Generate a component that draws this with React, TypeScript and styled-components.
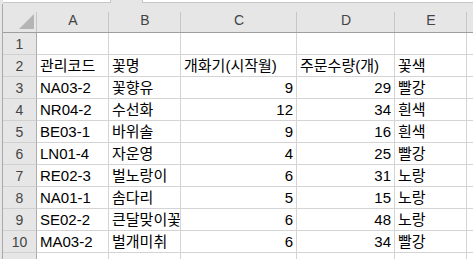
import React from "react";
import styled, { createGlobalStyle } from "styled-components";

const GlobalStyle = createGlobalStyle`
    html, body {
        margin: 0;
        padding: 0;
        background: #e6e6e6;
        overflow: hidden;
    }
    body {
        font-family: "Liberation Sans", "Noto Sans CJK KR", sans-serif;
    }
`;

type Row = {
    code: string;
    name: string;
    month: number;
    qty: number;
    color: string;
};

const rows: Row[] = [
    { code: "NA03-2", name: "꽃향유", month: 9, qty: 29, color: "빨강" },
    { code: "NR04-2", name: "수선화", month: 12, qty: 34, color: "흰색" },
    { code: "BE03-1", name: "바위솔", month: 9, qty: 16, color: "흰색" },
    { code: "LN01-4", name: "자운영", month: 4, qty: 25, color: "빨강" },
    { code: "RE02-3", name: "벌노랑이", month: 6, qty: 31, color: "노랑" },
    { code: "NA01-1", name: "솜다리", month: 5, qty: 15, color: "노랑" },
    { code: "SE02-2", name: "큰달맞이꽃", month: 6, qty: 48, color: "노랑" },
    { code: "MA03-2", name: "벌개미취", month: 6, qty: 34, color: "빨강" },
];

const columns = ["A", "B", "C", "D", "E", ""];

const App: React.FC = () => {
    return (
        <>
            <GlobalStyle />
            <Window>
                <FormulaStrip>
                    <NameBox />
                    <StripGap />
                    <FormulaBox />
                </FormulaStrip>
                <Body>
                    <LeftEdge />
                    <Sheet>
                        <Corner>
                            <CornerTriangle viewBox="0 0 16 16">
                                <polygon points="16,0 16,16 0,16" fill="#b5b5b5" />
                            </CornerTriangle>
                        </Corner>
                        {columns.map((c, i) => (
                            <ColHeader key={i} $last={i === columns.length - 1}>
                                {c}
                            </ColHeader>
                        ))}

                        <RowHeader>1</RowHeader>
                        <Cell />
                        <Cell />
                        <Cell />
                        <Cell />
                        <Cell />
                        <Cell $last />

                        <RowHeader>2</RowHeader>
                        <Cell>관리코드</Cell>
                        <Cell>꽃명</Cell>
                        <Cell>개화기(시작월)</Cell>
                        <Cell>주문수량(개)</Cell>
                        <Cell>꽃색</Cell>
                        <Cell $last />

                        {rows.map((r, i) => (
                            <React.Fragment key={r.code}>
                                <RowHeader>{i + 3}</RowHeader>
                                <Cell>{r.code}</Cell>
                                <Cell>{r.name}</Cell>
                                <Cell $num>{r.month}</Cell>
                                <Cell $num>{r.qty}</Cell>
                                <Cell>{r.color}</Cell>
                                <Cell $last />
                            </React.Fragment>
                        ))}

                        {/* row 11 only peeks in at the bottom edge */}
                        <RowHeader />
                        <Cell />
                        <Cell />
                        <Cell />
                        <Cell />
                        <Cell />
                        <Cell $last />
                    </Sheet>
                </Body>
            </Window>
        </>
    );
};

export default App;

const Window = styled.div`
    width: 473px;
    height: 259px;
    overflow: hidden;
    display: flex;
    flex-direction: column;
    background: #e6e6e6;
`;

const FormulaStrip = styled.div`
    display: flex;
    height: 4px;
    padding-left: 3px;
    flex-shrink: 0;
`;

const NameBox = styled.div`
    width: 107px;
    height: 2px;
    background: #ffffff;
    border-bottom: 1px solid #c6c6c6;
    border-right: 1px solid #c6c6c6;
`;

const StripGap = styled.div`
    width: 31px;
`;

const FormulaBox = styled.div`
    flex: 1;
    height: 2px;
    background: #ffffff;
    border-bottom: 1px solid #c6c6c6;
    border-left: 1px solid #c6c6c6;
`;

const Body = styled.div`
    display: flex;
    flex: 1;
    min-height: 0;
`;

const LeftEdge = styled.div`
    width: 3px;
    flex-shrink: 0;
    background: #e6e6e6;
    border-right: 1px solid #a9a9a9;
    box-sizing: border-box;
`;

const Sheet = styled.div`
    flex: 1;
    display: grid;
    grid-template-columns: 34px 72px 72px 116px 98px 72px 1fr;
    grid-template-rows: 29px repeat(11, 22px);
    background: #ffffff;
    font-size: 15px;
    color: #000000;
`;

const Corner = styled.div`
    position: relative;
    background: #e6e6e6;
    border-bottom: 1px solid #9e9e9e;
    display: flex;
    align-items: flex-end;
    justify-content: flex-end;
    padding: 0 3px 3px 0;
    box-sizing: border-box;

    &::after {
        content: "";
        position: absolute;
        right: 0;
        top: 8px;
        bottom: 0;
        width: 1px;
        background: #c6c6c6;
    }
`;

const CornerTriangle = styled.svg`
    width: 15px;
    height: 15px;
`;

const ColHeader = styled.div<{ $last?: boolean }>`
    position: relative;
    background: #e6e6e6;
    border-bottom: 1px solid #9e9e9e;
    box-sizing: border-box;
    display: flex;
    align-items: center;
    justify-content: center;
    padding-top: 4px;
    font-size: 14px;
    color: #444444;

    &::after {
        content: "";
        position: absolute;
        right: 0;
        top: 8px;
        bottom: 0;
        width: 1px;
        background: ${(p) => (p.$last ? "transparent" : "#c6c6c6")};
    }
`;

const RowHeader = styled.div`
    background: #e6e6e6;
    border-right: 1px solid #ababab;
    border-bottom: 1px solid #d0d0d0;
    box-sizing: border-box;
    display: flex;
    align-items: center;
    justify-content: center;
    font-size: 14px;
    color: #444444;
`;

const Cell = styled.div<{ $num?: boolean; $last?: boolean }>`
    border-right: ${(p) => (p.$last ? "none" : "1px solid #d4d4d4")};
    border-bottom: 1px solid #d4d4d4;
    box-sizing: border-box;
    padding: 0 3px;
    display: flex;
    align-items: center;
    justify-content: ${(p) => (p.$num ? "flex-end" : "flex-start")};
    white-space: nowrap;
    overflow: hidden;
    line-height: 21px;
`;
